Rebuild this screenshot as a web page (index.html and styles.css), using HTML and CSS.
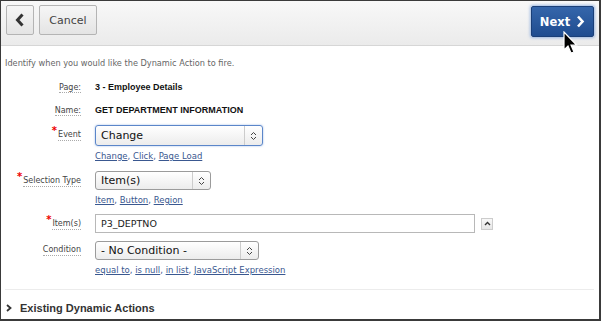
FILE: index.html
```html
<!DOCTYPE html>
<html>
<head>
<meta charset="utf-8">
<link rel="stylesheet" href="styles.css">
</head>
<body>
<div class="frame">
  <div class="header">
    <button class="btn btn-back" aria-label="Back">
      <svg width="10" height="14" viewBox="0 0 10 14"><path d="M7.5 1.5 L2.5 7 L7.5 12.5" fill="none" stroke="#333" stroke-width="3"/></svg>
    </button>
    <button class="btn btn-cancel">Cancel</button>
    <div class="spacer"></div>
    <button class="btn btn-next">Next
      <svg width="9" height="13" viewBox="0 0 9 13"><path d="M2 1.5 L6.5 6.5 L2 11.5" fill="none" stroke="#fff" stroke-width="2.6"/></svg>
    </button>
  </div>
  <div class="content">
    <p class="intro">Identify when you would like the Dynamic Action to fire.</p>
    <div class="form">
      <div class="row row-text">
        <div class="label"><span class="lbl">Page:</span></div>
        <div class="value">3 - Employee Details</div>
      </div>
      <div class="row row-text">
        <div class="label"><span class="lbl">Name:</span></div>
        <div class="value">GET DEPARTMENT INFORMATION</div>
      </div>
      <div class="row">
        <div class="label"><span class="req">*</span><span class="lbl">Event</span></div>
        <div class="field">
          <div class="select select-event focus"><span>Change</span><span class="arrows"><svg width="7" height="10" viewBox="0 0 7 10"><path d="M1 4 L3.5 1.5 L6 4 M1 6 L3.5 8.5 L6 6" fill="none" stroke="#444" stroke-width="1"/></svg></span></div>
          <div class="links"><a>Change</a>, <a>Click</a>, <a>Page Load</a></div>
        </div>
      </div>
      <div class="row">
        <div class="label"><span class="req">*</span><span class="lbl">Selection Type</span></div>
        <div class="field">
          <div class="select select-type"><span>Item(s)</span><span class="arrows"><svg width="7" height="10" viewBox="0 0 7 10"><path d="M1 4 L3.5 1.5 L6 4 M1 6 L3.5 8.5 L6 6" fill="none" stroke="#444" stroke-width="1"/></svg></span></div>
          <div class="links"><a>Item</a>, <a>Button</a>, <a>Region</a></div>
        </div>
      </div>
      <div class="row row-item">
        <div class="label"><span class="req">*</span><span class="lbl">Item(s)</span></div>
        <div class="field field-inline">
          <div class="input">P3_DEPTNO</div>
          <span class="upbtn"><svg width="7" height="5" viewBox="0 0 7 5"><path d="M1 4 L3.5 1.5 L6 4" fill="none" stroke="#333" stroke-width="1.4"/></svg></span>
        </div>
      </div>
      <div class="row">
        <div class="label"><span class="lbl">Condition</span></div>
        <div class="field">
          <div class="select select-cond"><span>- No Condition -</span><span class="arrows"><svg width="7" height="10" viewBox="0 0 7 10"><path d="M1 4 L3.5 1.5 L6 4 M1 6 L3.5 8.5 L6 6" fill="none" stroke="#444" stroke-width="1"/></svg></span></div>
          <div class="links"><a>equal to</a>, <a>is null</a>, <a>in list</a>, <a>JavaScript Expression</a></div>
        </div>
      </div>
    </div>
    <div class="existing">
      <svg width="6" height="8" viewBox="0 0 6 8"><path d="M1 1 L4.5 4 L1 7" fill="none" stroke="#333" stroke-width="1.8"/></svg>
      <span>Existing Dynamic Actions</span>
    </div>
  </div>
  <svg class="cursor" width="16" height="26" viewBox="0 0 16 26"><path d="M1 1 L1 19 L5 15 L8 22 L11 21 L8 14 L13.5 14 Z" fill="#000" stroke="#fff" stroke-width="1.2"/></svg>
</div>
</body>
</html>
```
FILE: styles.css
```css
* { box-sizing: border-box; }
html, body { margin: 0; padding: 0; background: #fff; }
.frame {
  position: relative;
  width: 601px;
  height: 321px;
  border: 1px solid #3a3a3a;
  border-right-width: 2px;
  border-bottom-width: 2px;
  overflow: hidden;
  font-family: "DejaVu Sans", sans-serif;
  color: #222;
}
.header {
  display: flex;
  align-items: flex-start;
  height: 45px;
  padding: 4px 5px 0 4px;
  background: linear-gradient(#f8f8f8, #ebebeb);
  border-bottom: 1px solid #d6d6d6;
  gap: 5px;
}
.spacer { flex: 1; }
.btn {
  font-family: "DejaVu Sans", sans-serif;
  height: 30px;
  border: 1px solid #b4b4b4;
  border-radius: 2px;
  background: linear-gradient(#f6f6f6, #e4e4e4);
  display: flex;
  align-items: center;
  justify-content: center;
  padding: 0;
  margin: 0;
}
.btn-back { width: 28px; margin-left: 1px; }
.btn-cancel { width: 58px; font-size: 11px; color: #444; }
.btn-next {
  width: 63px;
  height: 31px;
  margin-top: 1px;
  background: linear-gradient(#3566ab, #1f4c8f);
  border: 1px solid #1a3f78;
  color: #fff;
  font-weight: bold;
  font-size: 11.5px;
  gap: 6px;
  box-shadow: 0 0 3px 1px rgba(120,160,220,0.7);
}
.content { padding: 0 5px 0 4px; }
.intro {
  margin: 10px 0 0 0;
  height: 14px;
  line-height: 14px;
  font-size: 8.2px;
  color: #666;
}
.form { margin-top: 6px; }
.row {
  display: grid;
  grid-template-columns: 76px 1fr;
  column-gap: 14px;
  align-items: start;
}
.row-text { height: 23px; line-height: 23px; }
.label {
  text-align: right;
  font-size: 8px;
  color: #444;
  padding-top: 2px;
  line-height: 14px;
}
.row-text .label { line-height: 23px; padding-top: 0; }
.lbl { border-bottom: 1px dotted #aaa; padding-bottom: 1px; }
.row-text .lbl { padding-bottom: 0; }
.req { color: #e00; font-size: 10px; font-weight: bold; position: relative; top: -3px; margin-right: 1px; }
.value {
  font-family: "Liberation Sans", sans-serif;
  font-weight: bold;
  font-size: 9px;
  color: #111;
}
.row:nth-child(3) { margin-top: 3px; }
.field { display: flex; flex-direction: column; align-items: flex-start; }
.select {
  display: flex;
  align-items: center;
  justify-content: space-between;
  height: 19px;
  border: 1px solid #9b9b9b;
  border-radius: 3px;
  background: linear-gradient(#ffffff, #ececec);
  font-size: 11px;
  color: #111;
  padding-left: 5px;
}
.select .arrows {
  height: 100%;
  width: 18px;
  border-left: 1px solid #ccc;
  display: flex;
  align-items: center;
  justify-content: center;
}
.select-event { width: 168px; height: 21px; }
.select-event.focus { border-color: #5b86c9; box-shadow: 0 0 2px rgba(80,130,210,0.6); }
.select-type { width: 116px; }
.select-cond { width: 164px; }
.links {
  margin-top: 3px;
  line-height: 14px;
  height: 14px;
  font-size: 8.5px;
  color: #3a5890;
}
.links a { color: #3a5890; text-decoration: underline; }
.row:nth-child(4) { margin-top: 8px; }
.row-item { margin-top: 7px; }
.field-inline { flex-direction: row; align-items: center; gap: 6px; }
.input {
  width: 380px;
  height: 19px;
  border: 1px solid #b8b8b8;
  font-size: 9.5px;
  line-height: 17px;
  padding-left: 5px;
  color: #222;
}
.upbtn {
  width: 12px;
  height: 12px;
  border: 1px solid #ccc;
  background: linear-gradient(#f8f8f8, #e6e6e6);
  display: flex;
  align-items: center;
  justify-content: center;
}
.row:nth-child(6) { margin-top: 8px; }
.existing {
  margin-top: 12px;
  border-top: 1px solid #ececec;
  display: flex;
  align-items: center;
  gap: 8px;
  height: 36px;
  padding-left: 1px;
  font-family: "Liberation Sans", sans-serif;
  font-weight: bold;
  font-size: 11px;
  color: #333;
}
.cursor { position: absolute; left: 562px; top: 30px; }
```
